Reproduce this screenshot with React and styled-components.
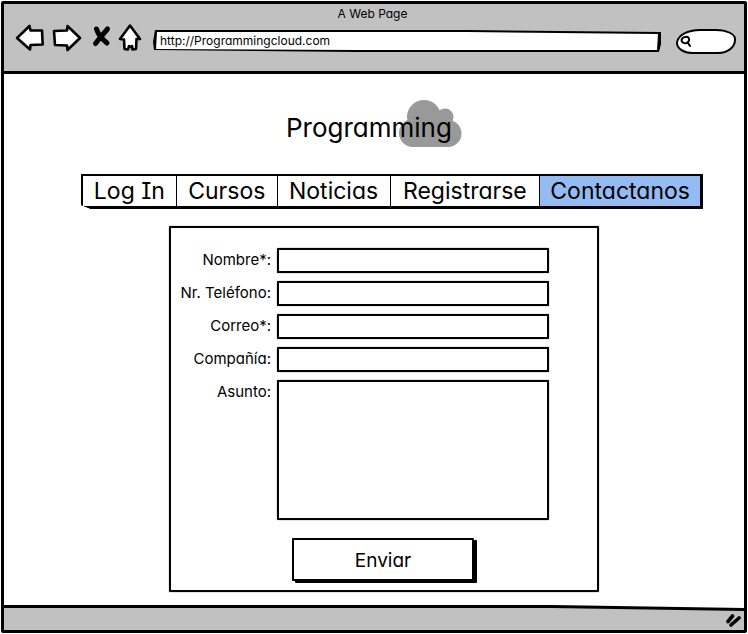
import React from "react";
import styled, { createGlobalStyle } from "styled-components";

const GlobalStyle = createGlobalStyle`
  *, *::before, *::after { box-sizing: border-box; }
  body {
    margin: 0;
    background: #fff;
    color: #000;
    font-family: Inter, "Open Sans", sans-serif;
    font-feature-settings: "cv11" 1, "cv08" 1;
  }
  button, input, textarea { font: inherit; color: inherit; font-feature-settings: inherit; }
`;

const Screen = styled.div`
  display: flex;
  min-height: 100vh;
  padding: 1px;
`;

const BrowserWindow = styled.div`
  flex: 1;
  min-width: 0;
  display: flex;
  flex-direction: column;
  border: 3px solid #000;
  border-radius: 2px;
`;

const Chrome = styled.header`
  height: 70px;
  padding: 0 8px 0 11px;
  background: #c1c1c1;
  border-bottom: 3px solid #000;
`;

const PageTitle = styled.div`
  height: 17px;
  padding-right: 6px;
  font-size: 12px;
  line-height: 20px;
  text-align: center;
`;

const Toolbar = styled.div`
  display: flex;
  align-items: center;
  height: 32px;
`;

const ToolButton = styled.button`
  display: block;
  width: ${(p) => p.$width}px;
  height: 32px;
  padding: 0;
  border: 0;
  background: none;

  svg {
    display: block;
    width: 100%;
    height: 32px;
    fill: #fff;
    stroke: #000;
    stroke-width: 2.6;
    stroke-linejoin: round;
    stroke-linecap: round;
  }
`;

const AddressBar = styled.div`
  flex: 1;
  min-width: 0;
  height: 22px;
  margin: 8px 15px 0 7px;
  padding: 2px 3px;
  background: #000;
  border-radius: 3px;
  clip-path: polygon(2px 0, 62% 0, 100% 2px, 100% 14px, calc(100% - 2px) 100%, 40% 100%, 1px 20px, 0 12px);
`;

const AddressInput = styled.input`
  display: block;
  width: 100%;
  height: 18px;
  padding: 0 0 1px 4px;
  border: 0;
  outline: 0;
  background: #fff;
  font-size: 12px;
  line-height: 16px;
  clip-path: polygon(1px 0, 62% 0, 100% 2px, calc(100% - 1px) 100%, 40% 100%, 0 17px);
`;

const SearchBox = styled.label`
  display: flex;
  align-items: center;
  width: 60px;
  height: 25px;
  margin-top: 8px;
  padding-left: 2px;
  background: #fff;
  border: 2px solid #000;
  border-radius: 24px 20px 18px 16px / 14px 10px 14px 11px;

  svg { flex: none; width: 13px; height: 14px; fill: none; stroke: #000; stroke-width: 2; stroke-linecap: round; }
  input { flex: 1; min-width: 0; width: 0; padding: 0; border: 0; outline: 0; background: none; font-size: 12px; }
`;

const Content = styled.main`
  flex: 1;
  padding: 26px 41px 12px;
`;

const Logo = styled.h1`
  position: relative;
  width: 176px;
  height: 48px;
  margin: 0 auto 26px;
  font-size: 26px;
  font-weight: 400;
  line-height: 56px;

  svg { position: absolute; right: 0; top: 0; width: 63px; height: 48px; fill: #999; }
  span { position: relative; }
`;

const Nav = styled.nav`
  display: grid;
  grid-template-columns: 93fr 101fr 113fr 150fr 161fr;
  height: 35px;
  margin-left: 36px;
  background: #000;
  border: solid #000;
  border-width: 2px 3px 4px 2px;
  clip-path: polygon(0 0, 100% 0, 100% 100%, 10px 100%, 0 31px);
`;

const NavLink = styled.a`
  background: ${(p) => (p.$active ? "#94bbf3" : "#fff")};
  border-left: ${(p) => (p.$first ? 0 : 1)}px solid #000;
  color: #000;
  font-size: 23px;
  line-height: 30px;
  text-align: center;
  text-decoration: none;
  white-space: nowrap;
`;

const ContactForm = styled.form`
  display: grid;
  grid-template-columns: 101px 1fr;
  column-gap: 5px;
  row-gap: 8px;
  margin: 17px 104px 0 124px;
  padding: 20px 48px 9px 0;
  border: 2px solid #000;
  border-radius: 1px;
  box-shadow: 0 0 1px #000;
`;

const FieldLabel = styled.label`
  padding-right: 1px;
  font-size: 15px;
  line-height: 24px;
  text-align: right;
  white-space: nowrap;
`;

const TextField = styled.input`
  display: block;
  width: 100%;
  height: 25px;
  padding: 0 6px;
  border: 2px solid #000;
  border-radius: 1px;
  box-shadow: 0 0 1px #000;
  background: #fff;
  outline: 0;
  font-size: 15px;
`;

const MessageField = styled.textarea`
  display: block;
  width: 100%;
  height: 140px;
  padding: 4px 6px;
  border: 2px solid #000;
  border-radius: 1px;
  box-shadow: 0 0 1px #000;
  background: #fff;
  outline: 0;
  resize: none;
  font-size: 15px;
`;

const Actions = styled.div`
  grid-column: 1 / -1;
  display: flex;
  justify-content: center;
  margin: 10px 0 0 46px;
`;

const SubmitButton = styled.button`
  width: 182px;
  height: 43px;
  padding: 2px 0 0;
  border: 2px solid #000;
  border-radius: 1px;
  background: #fff;
  box-shadow: 3px 2px 0 #000;
  font-size: 19px;
`;

const StatusBar = styled.footer`
  padding-top: 3px;
  background: #000;
  clip-path: polygon(0 0, 74% 0, 100% 3px, 100% 100%, 0 100%);
`;

const StatusInner = styled.div`
  display: flex;
  justify-content: flex-end;
  align-items: flex-end;
  height: 22px;
  padding: 0 2px 3px;
  background: #c1c1c1;
  clip-path: polygon(0 0, 74% 0, 100% 3px, 100% 100%, 0 100%);

  svg { width: 17px; height: 14px; stroke: #000; stroke-width: 3.6; stroke-linecap: round; }
`;

const tools = [
  { label: "Atrás", width: 34, d: "M2 17 L14.5 5 L15.5 9.5 L27 9.5 L27.7 23.5 L15.5 24 L15 28.5 Z" },
  { label: "Adelante", width: 41, d: "M5 10 L18 9.5 L18.5 5 L31 17 L18.5 29 L18 24.5 L6 24 Z" },
  { label: "Detener", width: 24, stop: true },
  { label: "Inicio", width: 32, d: "M16 4.5 L26 18 L22.5 18 L22 28 L18.5 28.5 L18 25 L16.5 26 L15 25 L14 28.5 L10.5 28 L10 18.5 L6 18 Z" },
];

const links = ["Log In", "Cursos", "Noticias", "Registrarse", "Contactanos"];

const fields = [
  { id: "nombre", label: "Nombre*:", type: "text" },
  { id: "telefono", label: "Nr. Teléfono:", type: "tel" },
  { id: "correo", label: "Correo*:", type: "email" },
  { id: "compania", label: "Compañía:", type: "text" },
];

function ToolIcon({ tool }) {
  return (
    <svg viewBox={`0 0 ${tool.width} 32`} aria-hidden="true">
      {tool.stop ? (
        <g fill="none" strokeWidth="5">
          <path d="M6.5 8 C8 13 12 18 17 22" />
          <path d="M17.5 8 C14 12 9 18 5.5 22.5" />
        </g>
      ) : (
        <path d={tool.d} />
      )}
    </svg>
  );
}

export default function App() {
  return (
    <Screen>
      <GlobalStyle />
      <BrowserWindow>
        <Chrome>
          <PageTitle>A Web Page</PageTitle>
          <Toolbar>
            {tools.map((tool) => (
              <ToolButton key={tool.label} type="button" aria-label={tool.label} $width={tool.width}>
                <ToolIcon tool={tool} />
              </ToolButton>
            ))}
            <AddressBar>
              <AddressInput aria-label="Dirección" defaultValue="http://Programmingcloud.com" />
            </AddressBar>
            <SearchBox>
              <svg viewBox="0 0 13 14" aria-hidden="true">
                <path d="M5 3 C8 2 9.500 4 9 6.500 C8.500 9 5 10 3 8.500 C0.500 7 1.500 3.500 5 3 Z M8 9 L10 12" />
              </svg>
              <input type="search" aria-label="Buscar" />
            </SearchBox>
          </Toolbar>
        </Chrome>

        <Content>
          <Logo>
            <svg viewBox="0 0 63 48" aria-hidden="true">
              <circle cx="25" cy="17" r="17" />
              <circle cx="46" cy="17" r="8.5" />
              <circle cx="14" cy="33" r="14" />
              <circle cx="49" cy="33.5" r="13.5" />
              <path d="M14 22 H49 V47 H14 Z" />
            </svg>
            <span>Programming</span>
          </Logo>

          <Nav aria-label="Principal">
            {links.map((link, i) => (
              <NavLink key={link} href="#" $first={i === 0} $active={link === "Contactanos"}>
                {link}
              </NavLink>
            ))}
          </Nav>

          <ContactForm onSubmit={(e) => e.preventDefault()}>
            {fields.map((field) => (
              <React.Fragment key={field.id}>
                <FieldLabel htmlFor={field.id}>{field.label}</FieldLabel>
                <TextField id={field.id} type={field.type} />
              </React.Fragment>
            ))}
            <FieldLabel htmlFor="asunto">Asunto:</FieldLabel>
            <MessageField id="asunto" />
            <Actions>
              <SubmitButton type="submit">Enviar</SubmitButton>
            </Actions>
          </ContactForm>
        </Content>

        <StatusBar>
          <StatusInner>
            <svg viewBox="0 0 17 14" aria-hidden="true">
              <path d="M3 8.5 L7.5 3 M6 12 L14 5" />
            </svg>
          </StatusInner>
        </StatusBar>
      </BrowserWindow>
    </Screen>
  );
}
